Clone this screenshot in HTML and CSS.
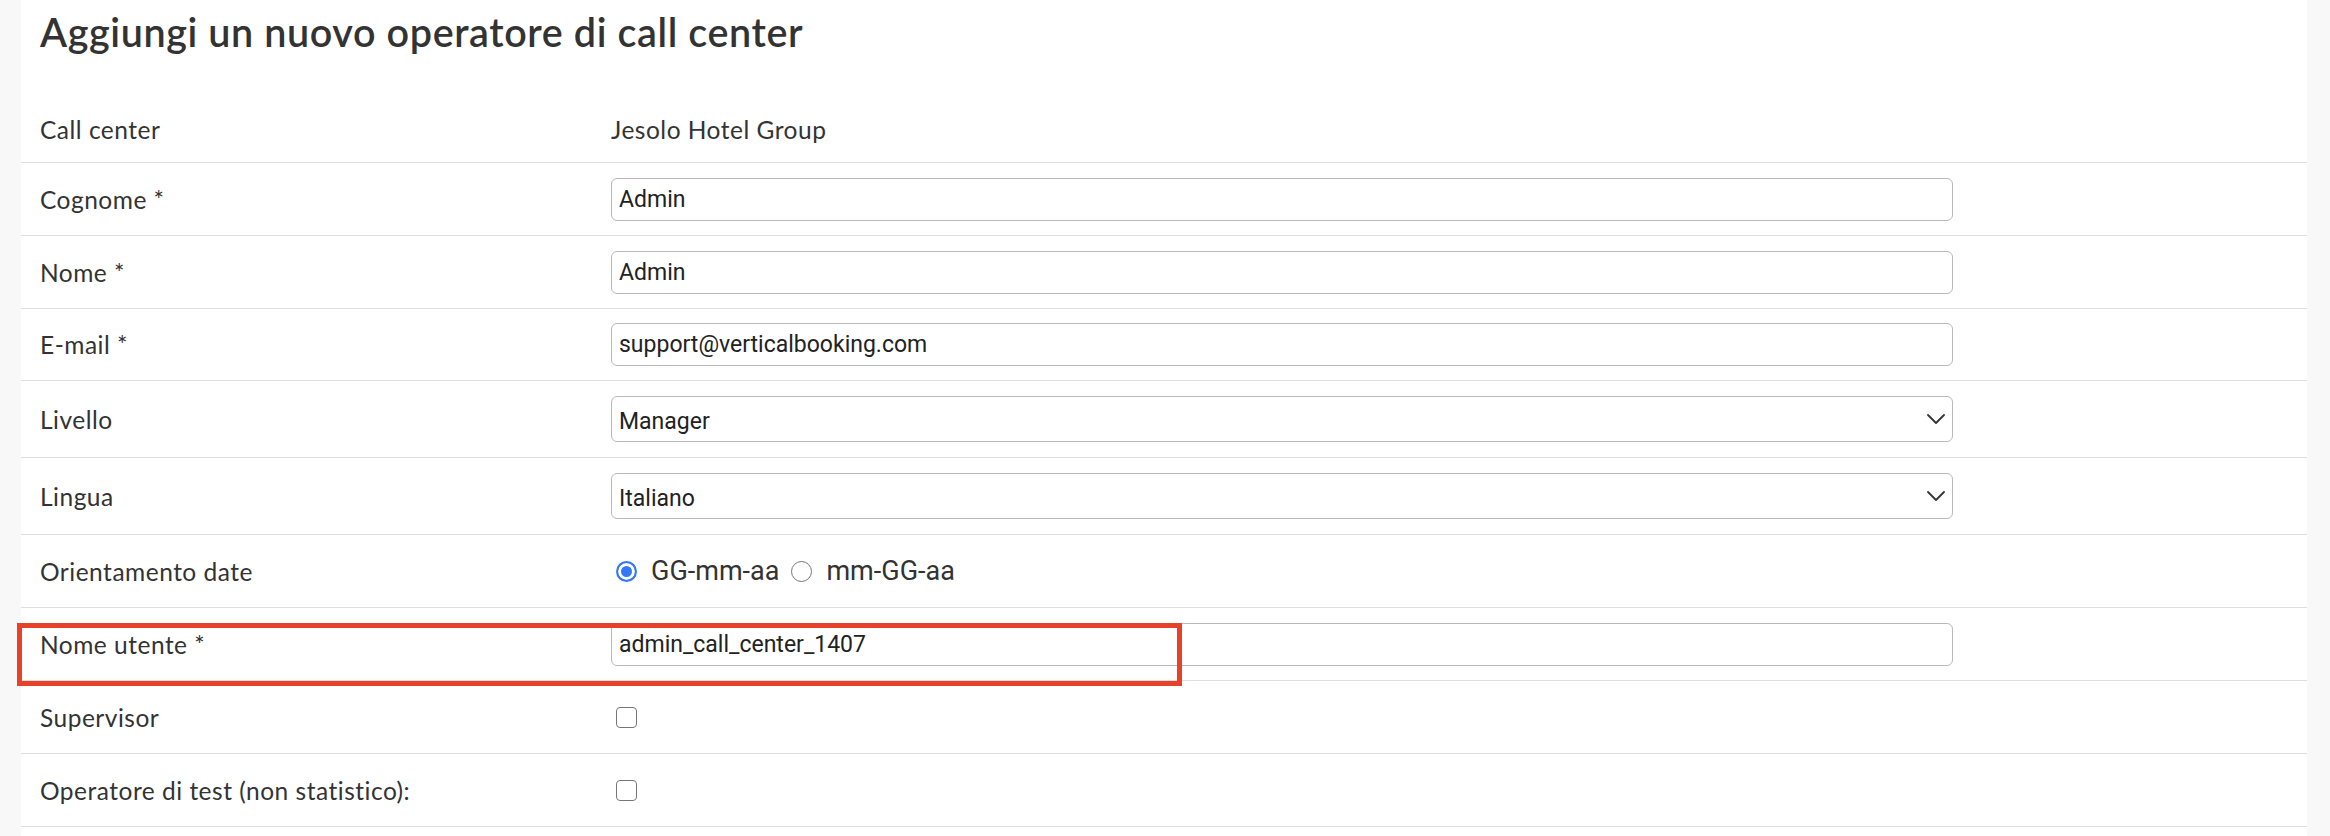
FILE: index.html
```html
<!DOCTYPE html>
<html lang="it">
<head>
<meta charset="utf-8">
<title>Aggiungi un nuovo operatore di call center</title>
<link rel="stylesheet" href="styles.css">
</head>
<body>
<main class="page">
  <h1 class="title">Aggiungi un nuovo operatore di call center</h1>
  <div class="form">
    <div class="row row-first">
      <div class="label">Call center</div>
      <div class="value text-value">Jesolo Hotel Group</div>
    </div>
    <div class="row">
      <div class="label">Cognome *</div>
      <div class="value"><input class="field" type="text" value="Admin"></div>
    </div>
    <div class="row">
      <div class="label">Nome *</div>
      <div class="value"><input class="field" type="text" value="Admin"></div>
    </div>
    <div class="row row-short">
      <div class="label">E-mail *</div>
      <div class="value"><input class="field" type="text" value="support@verticalbooking.com"></div>
    </div>
    <div class="row row-tall">
      <div class="label">Livello</div>
      <div class="value">
        <div class="select-wrap">
          <select class="field select"><option>Manager</option></select>
          <svg class="chevron" width="18" height="10" viewBox="0 0 18 10"><path d="M1 1 L9 9 L17 1" fill="none" stroke="#333" stroke-width="1.8" stroke-linecap="round" stroke-linejoin="round"/></svg>
        </div>
      </div>
    </div>
    <div class="row row-tall">
      <div class="label">Lingua</div>
      <div class="value">
        <div class="select-wrap">
          <select class="field select"><option>Italiano</option></select>
          <svg class="chevron" width="18" height="10" viewBox="0 0 18 10"><path d="M1 1 L9 9 L17 1" fill="none" stroke="#333" stroke-width="1.8" stroke-linecap="round" stroke-linejoin="round"/></svg>
        </div>
      </div>
    </div>
    <div class="row">
      <div class="label">Orientamento date</div>
      <div class="value radios">
        <label class="radio-label"><input class="radio" type="radio" name="date" checked><span>GG-mm-aa</span></label>
        <label class="radio-label"><input class="radio" type="radio" name="date"><span>mm-GG-aa</span></label>
      </div>
    </div>
    <div class="row row-highlight">
      <div class="label">Nome utente *</div>
      <div class="value"><input class="field" type="text" value="admin_call_center_1407"></div>
      <div class="highlight"></div>
    </div>
    <div class="row">
      <div class="label">Supervisor</div>
      <div class="value"><input class="check" type="checkbox"></div>
    </div>
    <div class="row">
      <div class="label">Operatore di test (non statistico):</div>
      <div class="value"><input class="check" type="checkbox"></div>
    </div>
  </div>
</main>
</body>
</html>
```
FILE: styles.css
```css
html, body {
  margin: 0;
  padding: 0;
}
body {
  background: #f8f8f8;
  font-family: "Lato", "Open Sans", sans-serif;
  color: #333;
}
.page {
  background: #fff;
  margin: 0 23px 0 21px;
  min-height: 836px;
}
.title {
  margin: 0;
  padding: 8px 19px 0;
  height: 96px;
  box-sizing: border-box;
  font-size: 39.5px;
  line-height: 48px;
  letter-spacing: 0.6px;
  font-weight: 600;
  color: #333;
}
.form {
  display: flex;
  flex-direction: column;
}
.row {
  display: grid;
  grid-template-columns: 571px 1fr;
  align-items: center;
  height: 73px;
  box-sizing: border-box;
  border-bottom: 1px solid #dedede;
  position: relative;
}
.row-first { height: 67px; }
.row-short { height: 72px; }
.row-tall { height: 77px; }
.label, .value {
  padding: 0 19px;
  font-size: 24.5px;
  letter-spacing: 0.5px;
  color: #333;
}
.field {
  display: block;
  width: 80%;
  height: 43px;
  box-sizing: border-box;
  border: 1px solid #b9b9b9;
  border-radius: 6px;
  padding: 0 7px;
  font-family: "Roboto", "Liberation Sans", sans-serif;
  font-size: 23px;
  letter-spacing: 0;
  color: #222;
  background: #fff;
  outline: none;
}
.select-wrap {
  position: relative;
  width: 80%;
}
.select-wrap .select {
  width: 100%;
  height: 46px;
  padding-top: 4px;
  appearance: none;
  -webkit-appearance: none;
}
.chevron {
  position: absolute;
  right: 8px;
  top: 18px;
}
.radios {
  display: flex;
  align-items: center;
  gap: 12px;
}
.radio-label {
  display: flex;
  align-items: center;
  gap: 14px;
  font-family: "Roboto", "Liberation Sans", sans-serif;
  font-size: 27px;
  letter-spacing: 0;
  color: #333;
}
.radio {
  appearance: none;
  -webkit-appearance: none;
  margin: 0 0 0 5px;
  width: 21px;
  height: 21px;
  border-radius: 50%;
  border: 1.5px solid #767676;
  box-sizing: border-box;
  background: #fff;
}
.radio:checked {
  border: 2px solid #3478f6;
  background: #3478f6;
  box-shadow: inset 0 0 0 3px #fff;
}
.radio-label + .radio-label .radio {
  margin-left: 0;
}
.check {
  appearance: none;
  -webkit-appearance: none;
  display: block;
  margin: 0 0 0 5px;
  width: 21px;
  height: 21px;
  border: 1.5px solid #767676;
  border-radius: 4px;
  box-sizing: border-box;
  background: #fff;
}
.highlight {
  position: absolute;
  left: -4px;
  top: 15px;
  width: 1165px;
  height: 63px;
  box-sizing: border-box;
  border: 5px solid #e8412a;
  pointer-events: none;
}
```
